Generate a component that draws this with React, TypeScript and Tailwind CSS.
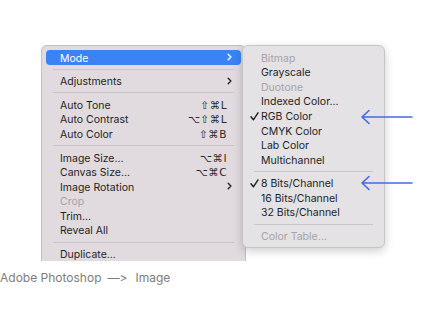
import React from "react";

type Item =
  | { kind: "sep" }
  | {
      kind: "item";
      label: string;
      shortcut?: string;
      sub?: boolean;
      disabled?: boolean;
      active?: boolean;
      checked?: boolean;
    };

const mainItems: Item[] = [
  { kind: "item", label: "Mode", sub: true, active: true },
  { kind: "sep" },
  { kind: "item", label: "Adjustments", sub: true },
  { kind: "sep" },
  { kind: "item", label: "Auto Tone", shortcut: "⇧⌘L" },
  { kind: "item", label: "Auto Contrast", shortcut: "⌥⇧⌘L" },
  { kind: "item", label: "Auto Color", shortcut: "⇧⌘B" },
  { kind: "sep" },
  { kind: "item", label: "Image Size...", shortcut: "⌥⌘I" },
  { kind: "item", label: "Canvas Size...", shortcut: "⌥⌘C" },
  { kind: "item", label: "Image Rotation", sub: true },
  { kind: "item", label: "Crop", disabled: true },
  { kind: "item", label: "Trim..." },
  { kind: "item", label: "Reveal All" },
  { kind: "sep" },
  { kind: "item", label: "Duplicate..." },
];

const subItems: Item[] = [
  { kind: "item", label: "Bitmap", disabled: true },
  { kind: "item", label: "Grayscale" },
  { kind: "item", label: "Duotone", disabled: true },
  { kind: "item", label: "Indexed Color..." },
  { kind: "item", label: "RGB Color", checked: true },
  { kind: "item", label: "CMYK Color" },
  { kind: "item", label: "Lab Color" },
  { kind: "item", label: "Multichannel" },
  { kind: "sep" },
  { kind: "item", label: "8 Bits/Channel", checked: true },
  { kind: "item", label: "16 Bits/Channel" },
  { kind: "item", label: "32 Bits/Channel" },
  { kind: "sep" },
  { kind: "item", label: "Color Table...", disabled: true },
];

function Chevron({ white }: { white?: boolean }) {
  return (
    <svg width="5" height="8" viewBox="0 0 5 8" className="block">
      <path
        d="M1.2 1.2 L3.9 4 L1.2 6.8"
        fill="none"
        stroke={white ? "#ffffff" : "#262626"}
        strokeWidth="1.4"
        strokeLinecap="round"
        strokeLinejoin="round"
      />
    </svg>
  );
}

function Check() {
  return (
    <svg width="9" height="9" viewBox="0 0 9 9" className="block">
      <path
        d="M1 4.8 L3.4 7.8 L8 0.8"
        fill="none"
        stroke="#1f1f1f"
        strokeWidth="1.4"
        strokeLinecap="round"
        strokeLinejoin="round"
      />
    </svg>
  );
}

function Row({ item }: { item: Item }) {
  if (item.kind === "sep") {
    return (
      <div className="h-[9px] flex items-center px-[7px]">
        <div className="h-px w-full bg-[#c9c4c8]" />
      </div>
    );
  }
  const color = item.active
    ? "text-white"
    : item.disabled
    ? "text-[#a7a3a7]"
    : "text-[#1e1e1e]";
  return (
    <div
      className={`relative h-[14.6px] flex items-center pl-[14px] pr-[9px] rounded-[4px] ${
        item.active ? "bg-[#3a83f6]" : ""
      } ${color}`}
    >
      {item.checked && (
        <span className="absolute left-[3px] top-[3.5px]">
          <Check />
        </span>
      )}
      <span className="flex-1 pt-[1.5px] text-[10.5px] leading-[13px] whitespace-nowrap">
        {item.label}
      </span>
      {item.shortcut && (
        <span className="mr-[5px] pt-[1.5px] text-[10.5px] leading-[13px] tracking-[0.5px] font-['DejaVu_Sans',sans-serif] text-[#2a2a2a]">
          {item.shortcut}
        </span>
      )}
      {item.sub && <Chevron white={item.active} />}
    </div>
  );
}

function Arrow() {
  return (
    <svg width="54" height="16" viewBox="0 0 54 16" className="block">
      <path
        d="M2 8 L52 8 M9 1.5 L2 8 L9 14.5"
        fill="none"
        stroke="#4169ef"
        strokeWidth="1.6"
        strokeLinecap="round"
        strokeLinejoin="round"
      />
    </svg>
  );
}

export default function App() {
  return (
    <div className="relative w-[438px] h-[328px] bg-white overflow-hidden font-['Inter','Liberation_Sans',sans-serif]">
      <div className="pt-[45px] pl-[41px] flex items-start">
        <div className="w-[205px] h-[216px] overflow-hidden">
          <div className="h-[240px] bg-[#e1dbdf] border border-[#c3bec2] rounded-[6px] px-[4px] pt-[4px] pb-[4px] shadow-[0_2px_8px_rgba(0,0,0,0.15)]">
            {mainItems.map((it, i) => (
              <Row key={i} item={it} />
            ))}
          </div>
        </div>
        <div className="relative z-10 ml-[-4px] w-[143px] bg-[#e4e2e5] border border-[#c6c4c7] rounded-[6px] px-[4px] pt-[4px] pb-[4px] shadow-[0_3px_10px_rgba(0,0,0,0.2)]">
          {subItems.map((it, i) => (
            <Row key={i} item={it} />
          ))}
        </div>
      </div>
      <div className="mt-[10px] flex items-center text-[12px] leading-[14px] text-[#7d7d7d] whitespace-pre [font-feature-settings:'calt'_0]">
        <span>Adobe Photoshop</span>
        <span className="ml-[6px]">—&gt;</span>
        <span className="ml-[8px]">Image</span>
      </div>
      <div className="absolute left-[360px] top-[109px] z-20">
        <Arrow />
      </div>
      <div className="absolute left-[360px] top-[175px] z-20">
        <Arrow />
      </div>
    </div>
  );
}
